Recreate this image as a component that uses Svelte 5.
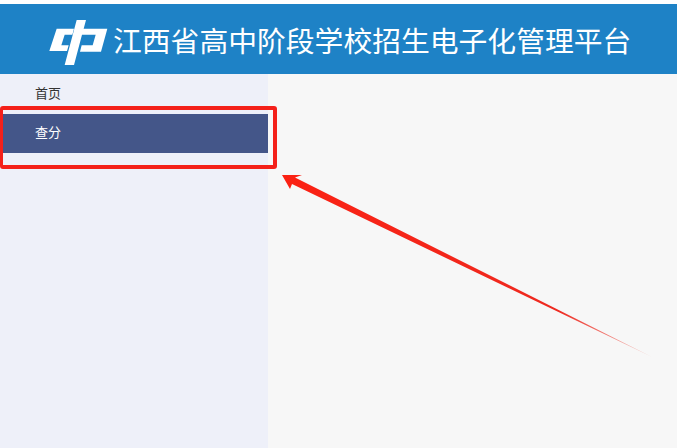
<script>
    const title = "江西省高中阶段学校招生电子化管理平台";
    const menu = [
        { label: "首页", active: false },
        { label: "查分", active: true }
    ];
</script>

<div class="page">
    <header class="header">
        <svg class="logo" viewBox="0 0 198 150" width="66" height="50" aria-hidden="true">
            <path fill="#fff" d="M38 38 H90 L85 56 H62 L52 88 H74 L69 105 H16 Z" />
            <path fill="#fff" d="M98 12 H126 L119 38 H190 L171 107 H108 L113 88 H146 L155 56 H114 L90 147 H62 Z" />
        </svg>
        <h1 class="title">{title}</h1>
    </header>
    <div class="body">
        <nav class="sidebar">
            {#each menu as item}
                <div class="item" class:active={item.active}>{item.label}</div>
            {/each}
        </nav>
        <main class="content"></main>
    </div>

    <!-- annotation drawn over the screenshot -->
    <div class="highlight"></div>
    <svg class="arrow" viewBox="0 0 677 448" width="677" height="448" aria-hidden="true">
        <defs>
            <linearGradient id="fade" gradientUnits="userSpaceOnUse" x1="282" y1="175" x2="650" y2="356">
                <stop offset="0" stop-color="#fb2113" />
                <stop offset="0.75" stop-color="#ee2a20" />
                <stop offset="1" stop-color="#f3c4bf" />
            </linearGradient>
        </defs>
        <path fill="url(#fade)" d="M282 175 L302 175 L295 177.500 L652 357 L292 184 L290 189 Z" />
    </svg>
</div>

<style>
    :global(body) {
        background: #fff;
    }
    .page {
        position: relative;
        width: 677px;
        height: 448px;
        overflow: hidden;
        padding-top: 4px;
        box-sizing: border-box;
        font-family: "Liberation Sans", "Noto Sans CJK SC", sans-serif;
    }
    .header {
        display: flex;
        align-items: center;
        height: 70px;
        padding-left: 44px;
        background: #1e82c6;
        color: #fff;
    }
    .logo {
        flex: none;
        margin: 4px 3px 0 0;
    }
    .title {
        margin: 1px 0 0;
        font-size: 28.8px;
        font-weight: 400;
        white-space: nowrap;
    }
    .body {
        display: flex;
        height: 374px;
    }
    .sidebar {
        width: 268px;
        background: #eef0f9;
        padding-top: 1px;
        font-size: 13px;
        color: #333;
    }
    .item {
        height: 39px;
        line-height: 37px;
        padding-left: 35px;
    }
    .active {
        background: #445689;
        color: #fff;
    }
    .content {
        flex: 1;
        background: #f7f7f7;
    }
    .highlight {
        position: absolute;
        left: 0;
        top: 106px;
        width: 277px;
        height: 63px;
        box-sizing: border-box;
        border: 4px solid #f4201a;
        border-left-width: 3px;
        border-radius: 3px;
    }
    .arrow {
        position: absolute;
        left: 0;
        top: 0;
    }
</style>
